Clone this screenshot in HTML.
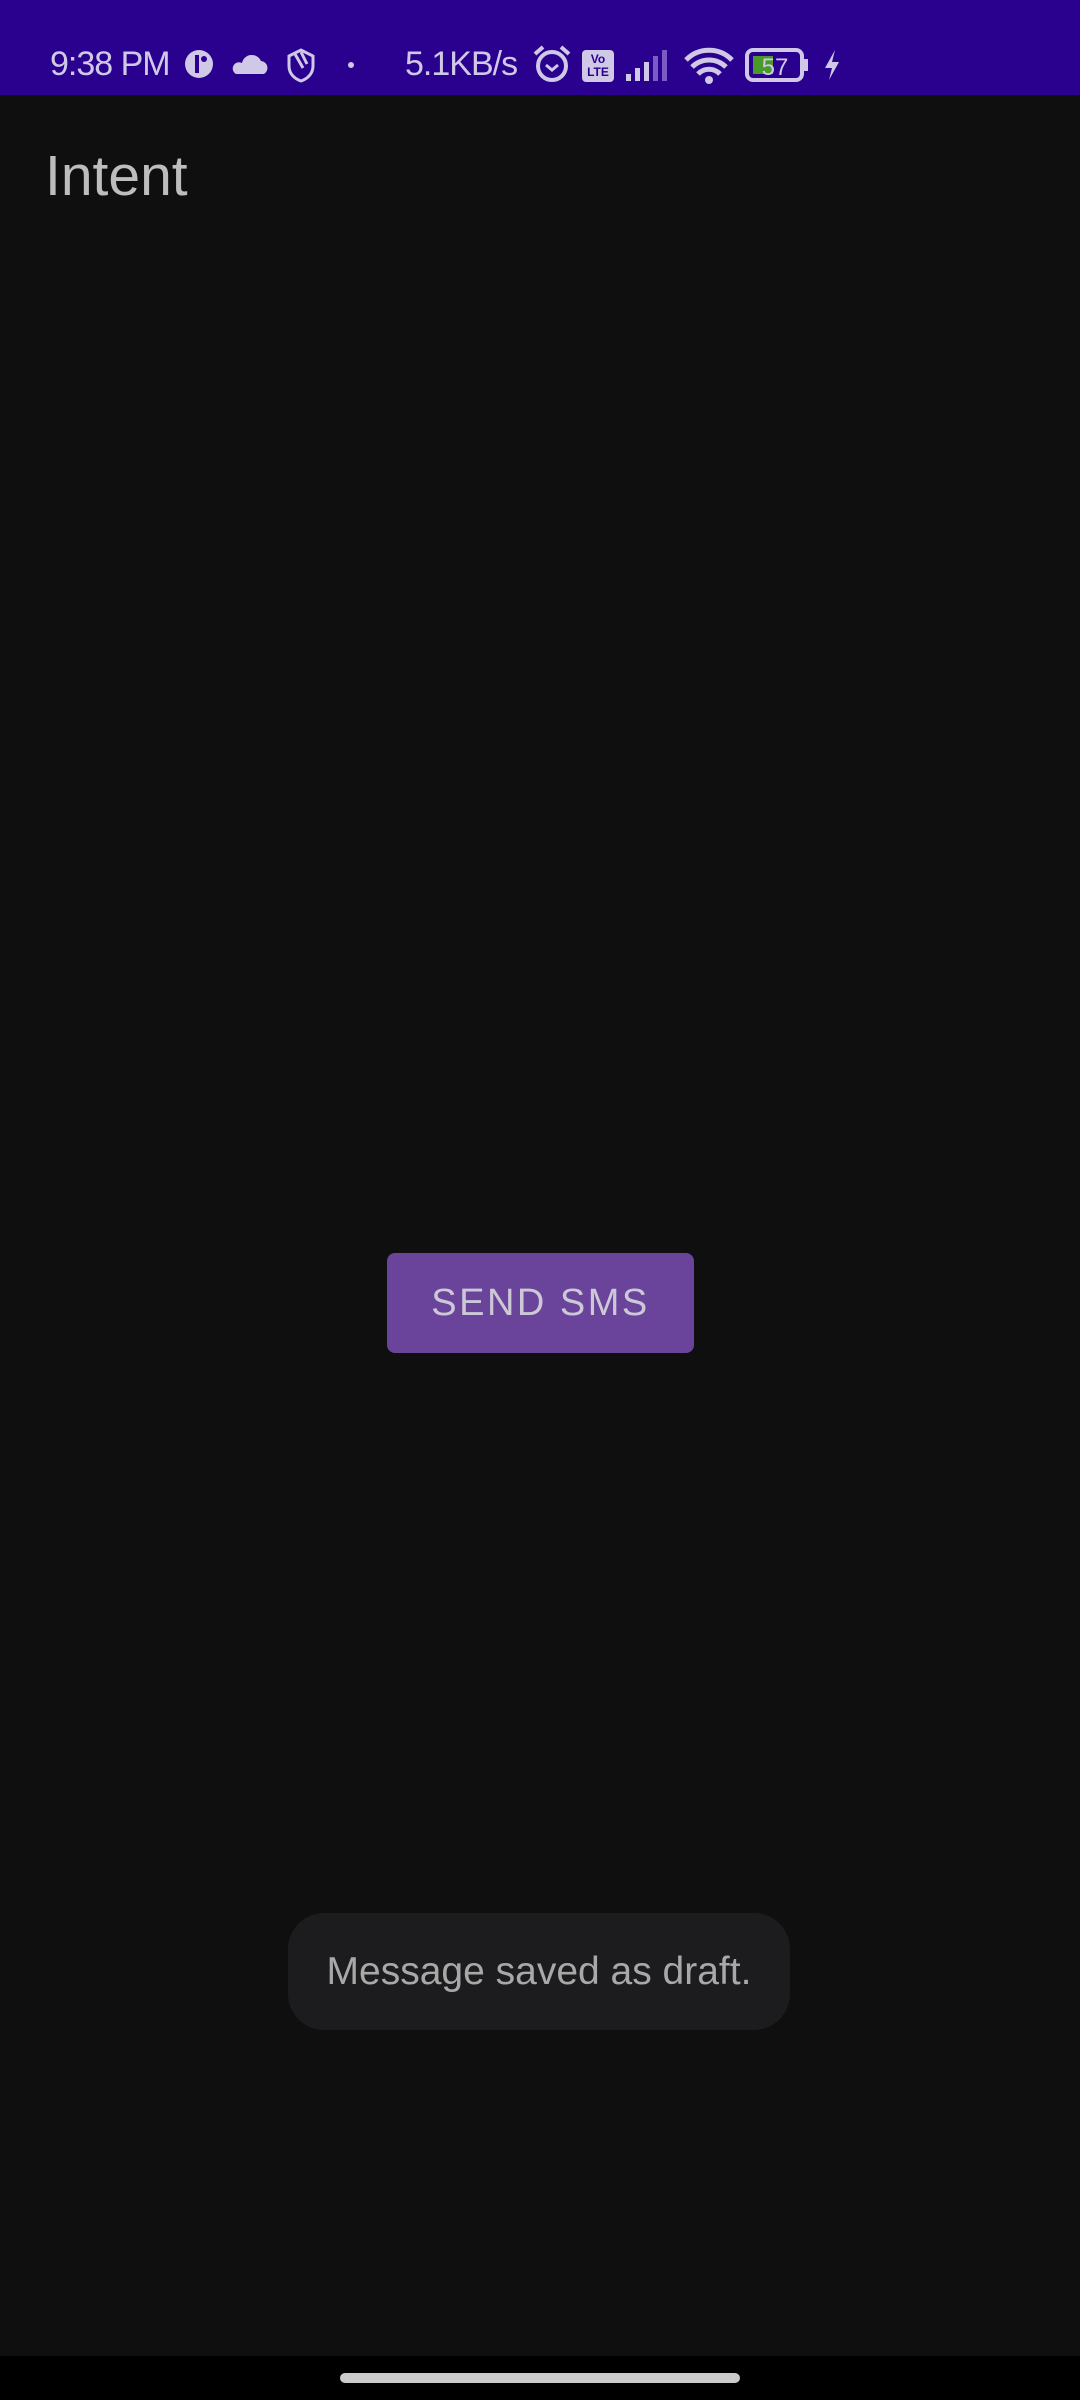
<!DOCTYPE html>
<html><head><meta charset="utf-8"><style>
*{margin:0;padding:0;box-sizing:border-box}
body{width:1080px;height:2400px;background:#0f0f0f;position:relative;overflow:hidden;font-family:"Liberation Sans",sans-serif}
.sb{position:absolute;left:0;top:0;width:1080px;height:95px;background:#2a008e;color:#cfc8e6}
.t{position:absolute;top:45px;font-size:34px;letter-spacing:-1px}
.title{position:absolute;left:45px;top:143px;font-size:57px;color:#bdbdbd}
.btn{position:absolute;left:387px;top:1253px;width:307px;height:100px;background:#6a439b;border-radius:8px;color:#cdc8d6;font-size:38px;letter-spacing:2.5px;text-align:center;line-height:100px;font-weight:500}
.toast{position:absolute;left:288px;top:1913px;width:502px;height:117px;background:#1c1c1e;border-radius:36px;color:#a8a8a8;font-size:39px;text-align:center;line-height:117px}
.nav{position:absolute;left:0;top:2356px;width:1080px;height:44px;background:#000}
.pill{position:absolute;left:340px;top:2373px;width:400px;height:10px;border-radius:5px;background:#cbcbcb}
</style></head><body>
<div class="sb">
<div class="t" style="left:50px">9:38 PM</div>
<svg style="position:absolute;left:184px;top:47px" width="30" height="34"><circle cx="15" cy="17" r="14" fill="#cfc8e6"/><rect x="11" y="8" width="4" height="18" fill="#2a008e"/><circle cx="20" cy="12" r="3" fill="#2a008e"/></svg>
<svg style="position:absolute;left:232px;top:52px" width="36" height="24"><path d="M4 22h28a7 7 0 0 0-3-13 10 10 0 0 0-19 2 6 6 0 0 0-6 11z" fill="#cfc8e6"/></svg>
<svg style="position:absolute;left:284px;top:46px" width="34" height="38"><path d="M5 10l12-6 12 6v10c0 8-6 13-12 15C11 33 5 28 5 20z" fill="none" stroke="#cfc8e6" stroke-width="3"/><path d="M11 8l8 14M17 6l6 12" stroke="#cfc8e6" stroke-width="3"/></svg>
<div style="position:absolute;left:348px;top:62px;width:6px;height:6px;border-radius:3px;background:#cfc8e6"></div>
<div class="t" style="left:405px">5.1KB/s</div>
<svg style="position:absolute;left:532px;top:44px" width="40" height="40"><circle cx="20" cy="22" r="14" fill="none" stroke="#cfc8e6" stroke-width="4"/><path d="M14 21l6 5 6-5" fill="none" stroke="#cfc8e6" stroke-width="3"/><path d="M3 10l8-7M37 10l-8-7" stroke="#cfc8e6" stroke-width="4"/></svg>
<div style="position:absolute;left:582px;top:50px;width:32px;height:32px;background:#cfc8e6;border-radius:4px;color:#2a008e;font-size:12px;font-weight:bold;line-height:13px;text-align:center;padding-top:3px">Vo<br>LTE</div>
<svg style="position:absolute;left:624px;top:48px" width="48" height="34"><rect x="2" y="26" width="5" height="7" fill="#cfc8e6"/><rect x="11" y="20" width="5" height="13" fill="#cfc8e6"/><rect x="20" y="14" width="5" height="19" fill="#cfc8e6"/><rect x="29" y="8" width="5" height="25" fill="#7a5cc4"/><rect x="38" y="2" width="5" height="31" fill="#7a5cc4"/></svg>
<svg style="position:absolute;left:684px;top:46px" width="50" height="40"><path d="M2 14a32 32 0 0 1 46 0M8 21a24 24 0 0 1 34 0M14 28a15 15 0 0 1 22 0" fill="none" stroke="#cfc8e6" stroke-width="5"/><circle cx="25" cy="34" r="4" fill="#cfc8e6"/></svg>
<svg style="position:absolute;left:745px;top:48px" width="70" height="34"><rect x="2" y="2" width="55" height="30" rx="6" fill="none" stroke="#cfc8e6" stroke-width="4"/><rect x="8" y="8" width="20" height="18" fill="#4a9a2a"/><rect x="59" y="11" width="4" height="12" fill="#cfc8e6"/><text x="30" y="27" font-size="24" fill="#cfc8e6" text-anchor="middle" font-family="Liberation Sans">57</text></svg>
<svg style="position:absolute;left:822px;top:49px" width="20" height="32"><path d="M13 1L3 19h7l-3 12 10-18h-7z" fill="#cfc8e6"/></svg>
</div>
<div class="title">Intent</div>
<div class="btn">SEND SMS</div>
<div class="toast">Message saved as draft.</div>
<div class="nav"></div><div class="pill"></div>
</body></html>
